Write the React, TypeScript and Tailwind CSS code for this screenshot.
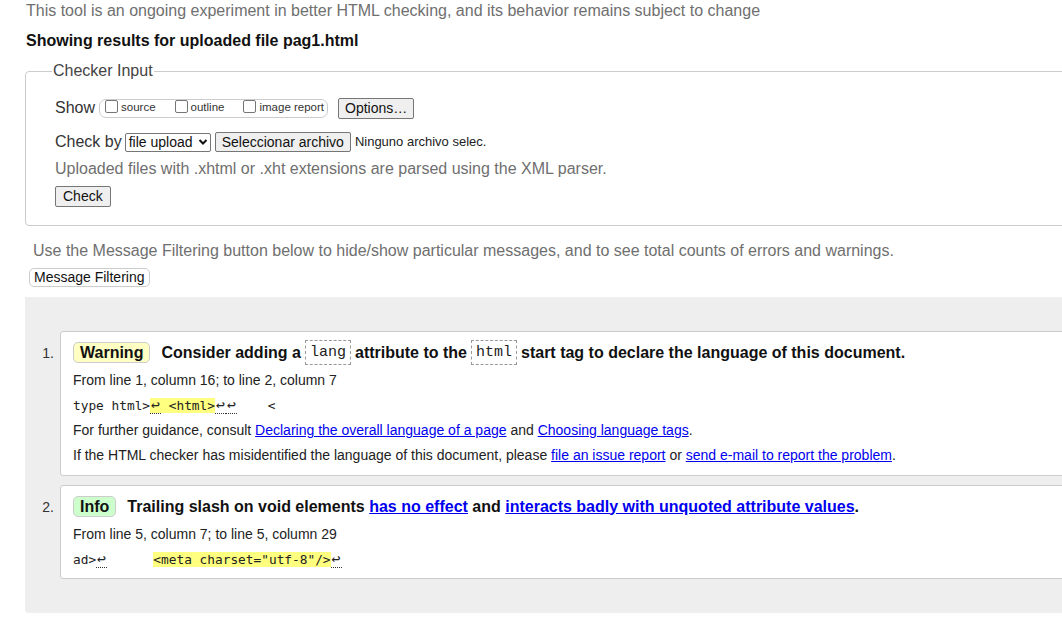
import React from "react";

const Box = () => (
  <span className="inline-block w-[13px] h-[13px] border border-[#767676] rounded-[2px] bg-white mr-[3px] align-[-2px]" />
);

const Btn = ({ children, className = "" }: { children: React.ReactNode; className?: string }) => (
  <span
    className={
      "inline-flex items-center bg-[#efefef] border border-[#767676] rounded-[2px] text-[#111] " + className
    }
  >
    {children}
  </span>
);

const Badge = ({ label, bg }: { label: string; bg: string }) => (
  <span className={"inline-flex items-center h-[21px] px-[6px] rounded-[5px] border border-[#ccc] font-bold text-[16px] mr-[11px] " + bg}>
    {label}
  </span>
);

const Code = ({ children }: { children: React.ReactNode }) => (
  <code className="inline-block border border-dashed border-[#999] px-[4px] h-[25px] leading-[23px] font-normal text-[15px] text-[#222] align-middle mx-[4px] font-['Liberation_Mono',monospace]">
    {children}
  </code>
);

// return marker with dotted underline
const Ret = () => (
  <span className="inline-block w-[11px] text-center text-[15px] leading-[16px] border-b border-dotted border-[#333]">↩</span>
);

const A = ({ children }: { children: React.ReactNode }) => (
  <a className="text-[#0000ee] underline">{children}</a>
);

export default function App() {
  return (
    <div className="w-[1062px] h-[630px] overflow-hidden bg-white text-[#222] font-['Liberation_Sans',Arial,sans-serif]">
      <div className="w-[1120px] pl-[26px]">
        <p className="text-[16px] leading-[18px] pt-[2px] text-[#6f6f6f]">
          This tool is an ongoing experiment in better HTML checking, and its behavior remains subject to change
        </p>
        <h2 className="text-[16px] font-bold leading-[18px] mt-[12px] text-[#111]">
          Showing results for uploaded file pag1.html
        </h2>

        <fieldset className="mt-[12px] -ml-[1px] border border-[#ccc] rounded-[4px] pl-[29px] pb-[17px] h-[164px]">
          <legend className="-ml-[3px] px-[1px] text-[16px] leading-[18px] text-[#444]">Checker Input</legend>

          <div className="flex items-center mt-[17px] h-[22px]">
            <span className="text-[16px] text-[#333] mr-[4px]">Show</span>
            <span className="inline-flex items-center h-[19px] w-[229px] border border-[#ccc] rounded-[7px] pl-[5px] text-[11.5px] text-[#333]">
              <span className="mr-[19px]"><Box />source</span>
              <span className="mr-[19px]"><Box />outline</span>
              <span><Box />image report</span>
            </span>
            <Btn className="ml-[10px] h-[21px] px-[6px] text-[14px]">Options…</Btn>
          </div>

          <div className="flex items-center mt-[13px] h-[20px]">
            <span className="text-[16px] text-[#333] mr-[3px]">Check by</span>
            <span className="inline-flex items-center h-[19px] w-[86px] border border-[#767676] rounded-[2px] pl-[3px] text-[14px] text-[#111]">
              file upload
              <svg width="10" height="8" viewBox="0 0 10 8" className="ml-[5px]">
                <path d="M1.5 2 L5 5.5 L8.5 2" stroke="#111" strokeWidth="2" fill="none" />
              </svg>
            </span>
            <Btn className="ml-[4px] h-[20px] px-[6px] text-[14px]">Seleccionar archivo</Btn>
            <span className="ml-[4px] text-[13px] text-[#222]">Ninguno archivo selec.</span>
          </div>

          <p className="mt-[8px] text-[16px] leading-[18px] text-[#6f6f6f]">
            Uploaded files with .xhtml or .xht extensions are parsed using the XML parser.
          </p>
          <Btn className="mt-[8px] h-[21px] px-[7px] text-[14px]">Check</Btn>
        </fieldset>

        <p className="mt-[16px] pl-[7px] text-[16px] leading-[18px] text-[#6f6f6f]">
          Use the Message Filtering button below to hide/show particular messages, and to see total counts of errors and warnings.
        </p>
        <span className="inline-flex items-center mt-[8px] ml-[3px] h-[19px] px-[4px] border border-[#ccc] rounded-[5px] text-[14px] text-[#111] bg-white">
          Message Filtering
        </span>

        <div className="mt-[8px] -ml-[1px] bg-[#eeeeee] rounded-bl-[4px] pt-[34px] pb-[34px]">
          <div className="flex">
            <div className="w-[35px] pr-[6px] text-right text-[14px] pt-[12px] text-[#333]">1.</div>
            <div className="flex-1 bg-white border border-[#ccc] rounded-l-[3px] pl-[12px] pt-[10px] h-[145px]">
              <div className="flex items-center text-[16px] font-bold text-[#111] h-[21px]">
                <Badge label="Warning" bg="bg-[#ffffc4]" />
                Consider adding a<Code>lang</Code>attribute to the<Code>html</Code>start tag to declare the language of this document.
              </div>
              <div className="text-[14px] leading-[25px] text-[#222] mt-[5px]">
                <p>From line 1, column 16; to line 2, column 7</p>
                <p className="font-['DejaVu_Sans_Mono',monospace] text-[12.8px] whitespace-pre">
                  type html&gt;<span className="bg-[#ffff80]"><Ret /> &lt;html&gt;</span><Ret /><Ret />{"    <"}
                </p>
                <p>
                  For further guidance, consult <A>Declaring the overall language of a page</A> and{" "}
                  <A>Choosing language tags</A>.
                </p>
                <p>
                  If the HTML checker has misidentified the language of this document, please{" "}
                  <A>file an issue report</A> or <A>send e-mail to report the problem</A>.
                </p>
              </div>
            </div>
          </div>

          <div className="flex mt-[9px]">
            <div className="w-[35px] pr-[6px] text-right text-[14px] pt-[12px] text-[#333]">2.</div>
            <div className="flex-1 bg-white border border-[#ccc] rounded-l-[3px] pl-[12px] pt-[10px] h-[94px]">
              <div className="flex items-center text-[16px] font-bold text-[#111] h-[21px]">
                <Badge label="Info" bg="bg-[#ccffcc]" />
                <span>
                  Trailing slash on void elements <A>has no effect</A> and{" "}
                  <A>interacts badly with unquoted attribute values</A>.
                </span>
              </div>
              <div className="text-[14px] leading-[25px] text-[#222] mt-[5px]">
                <p>From line 5, column 7; to line 5, column 29</p>
                <p className="font-['DejaVu_Sans_Mono',monospace] text-[12.8px] whitespace-pre">
                  ad&gt;<Ret />{"      "}<span className="bg-[#ffff80]">&lt;meta charset="utf-8"/&gt;</span><Ret />
                </p>
              </div>
            </div>
          </div>
        </div>
      </div>
    </div>
  );
}
